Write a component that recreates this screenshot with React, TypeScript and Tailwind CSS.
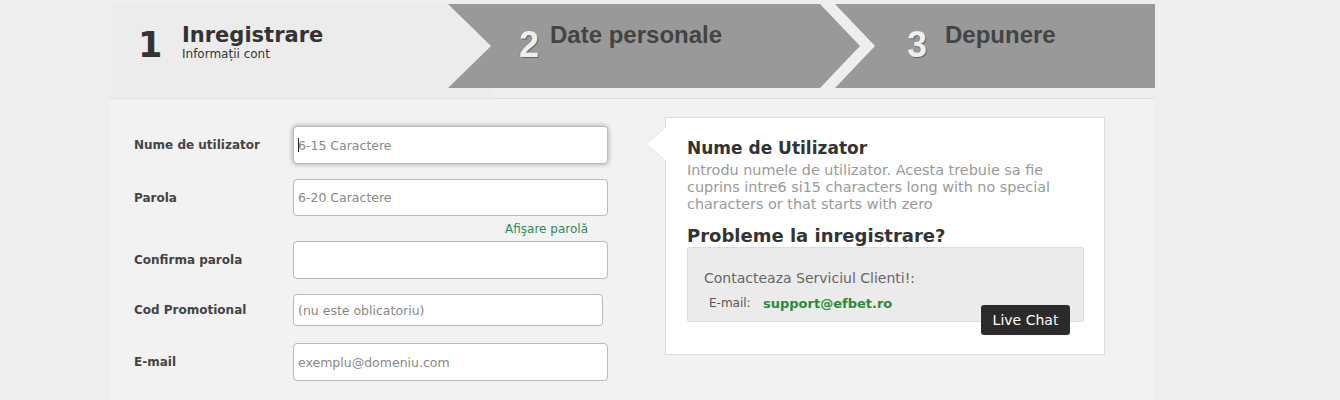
import React from 'react';

const Field: React.FC<{ label: string; placeholder?: string; w?: string; h?: string; focused?: boolean; mt: string }> = ({
    label,
    placeholder,
    w = 'w-[315px]',
    h = 'h-[38px]',
    focused,
    mt,
}) => (
    <div className={`flex items-center ${mt}`}>
        <label className="w-[159px] shrink-0 text-[12px] font-bold text-[#444]">{label}</label>
        <div className={`relative ${w} ${h}`}>
            <input
                className={`w-full h-full bg-white border border-[#b9b9b9] rounded-[4px] pl-[4px] text-[12.5px] text-[#333] placeholder:text-[#888] outline-none ${focused ? 'shadow-[0_0_5px_rgba(0,0,0,0.35)]' : ''}`}
                placeholder={placeholder}
            />
            {focused && <span className="absolute left-[5px] top-[12px] w-px h-[14px] bg-[#222]" />}
        </div>
    </div>
);

export default function App() {
    return (
        <div className="w-full h-[400px] overflow-hidden bg-[#eeeeee] font-['DejaVu_Sans',Verdana,sans-serif]">
            <div className="ml-[110px] w-[1044px] h-[400px] bg-[#f2f2f2]">
                {/* Steps header */}
                <div className="pt-[4px] bg-[#eeeeee] border-b border-[#dedede]">
                    <div className="flex items-start ml-[3px]">
                        <div className="w-[380px] h-[94px] shrink-0 bg-[#ececec] flex items-start pt-[21px] pl-[25px]">
                            <span className="text-[35px] leading-[40px] font-bold text-[#333] w-[44px]">1</span>
                            <div>
                                <div className="text-[21px] leading-[24px] font-bold text-[#333] -mt-[2px]">Inregistrare</div>
                                <div className="text-[12px] leading-[12px] mt-[1px] text-[#333]">Informații cont</div>
                            </div>
                        </div>
                        <div className="-ml-[45px] w-[412px] h-[84px] shrink-0 bg-[#999999] [clip-path:polygon(0_0,372px_0,412px_50%,372px_100%,0_100%,43px_50%)] flex items-start pl-[71px] pt-[21px] font-['Liberation_Sans',Arial,sans-serif]">
                            <span className="text-[36px] leading-[40px] font-bold text-[#eeeeee] [text-shadow:1px_1px_0_#666,-1px_0_0_#888] w-[31px]">2</span>
                            <span className="text-[24px] leading-[26px] font-bold text-[#444] -mt-[3px]">Date personale</span>
                        </div>
                        <div className="-ml-[25px] w-[320px] h-[84px] shrink-0 bg-[#999999] [clip-path:polygon(0_0,100%_0,100%_100%,0_100%,40px_50%)] flex items-start pl-[72px] pt-[21px] font-['Liberation_Sans',Arial,sans-serif]">
                            <span className="text-[36px] leading-[40px] font-bold text-[#eeeeee] [text-shadow:1px_1px_0_#666,-1px_0_0_#888] w-[38px]">3</span>
                            <span className="text-[24px] leading-[26px] font-bold text-[#444] -mt-[3px]">Depunere</span>
                        </div>
                    </div>
                </div>

                {/* Form + help */}
                <div className="flex items-start">
                    <div className="w-[555px] shrink-0 pl-[24px]">
                        <Field label="Nume de utilizator" placeholder="6-15 Caractere" focused mt="mt-[27px]" />
                        <Field label="Parola" placeholder="6-20 Caractere" h="h-[37px]" mt="mt-[15px]" />
                        <div className="w-[456px] h-[25px] flex items-center justify-end pr-[2px] text-[12px] text-[#2e8b57]">
                            Afişare parolă
                        </div>
                        <Field label="Confirma parola" mt="mt-0" />
                        <Field label="Cod Promotional" placeholder="(nu este oblicatoriu)" w="w-[310px]" h="h-[32px]" mt="mt-[15px]" />
                        <Field label="E-mail" placeholder="exemplu@domeniu.com" mt="mt-[17px]" />
                    </div>

                    <div className="relative mt-[18px] w-[440px] h-[238px] bg-white border border-[#dcdcdc] pl-[21px] pr-[20px] pt-[20px]">
                        <svg className="absolute -left-[21px] top-[9px]" width="22" height="36" viewBox="0 0 22 36">
                            <polygon points="21,0 1,17 21,34" fill="#ffffff" />
                            <polyline points="21,0 1,17 21,34" fill="none" stroke="#e2e2e2" strokeWidth="1" />
                        </svg>
                        <div className="text-[17px] leading-[21px] font-bold text-[#333]">Nume de Utilizator</div>
                        <div className="mt-[3px] text-[14.4px] leading-[17px] text-[#999]">
                            Introdu numele de utilizator. Acesta trebuie sa fie
                            <br />
                            cuprins intre6 si15 characters long with no special
                            <br />
                            characters or that starts with zero
                        </div>
                        <div className="mt-[12px] text-[18px] leading-[22px] font-bold text-[#333]">Probleme la inregistrare?</div>
                        <div className="h-[75px] bg-[#ebebeb] border border-[#dddddd] rounded-[2px] pl-[16px] pt-[22px]">
                            <div className="text-[14px] leading-[17px] text-[#666]">Contacteaza Serviciul Clienti!:</div>
                            <div className="mt-[8px] pl-[5px] flex items-center text-[12px] leading-[17px] text-[#555]">
                                <span className="w-[54px]">E-mail:</span>
                                <span className="text-[13px] font-bold text-[#2a8a3c]">support@efbet.ro</span>
                            </div>
                        </div>
                        <button className="absolute left-[315px] top-[187px] w-[89px] h-[30px] rounded-[3px] bg-[#2b2b2b] text-white text-[14px] font-['DejaVu_Sans',Verdana,sans-serif]">
                            Live Chat
                        </button>
                    </div>
                </div>
            </div>
        </div>
    );
}
